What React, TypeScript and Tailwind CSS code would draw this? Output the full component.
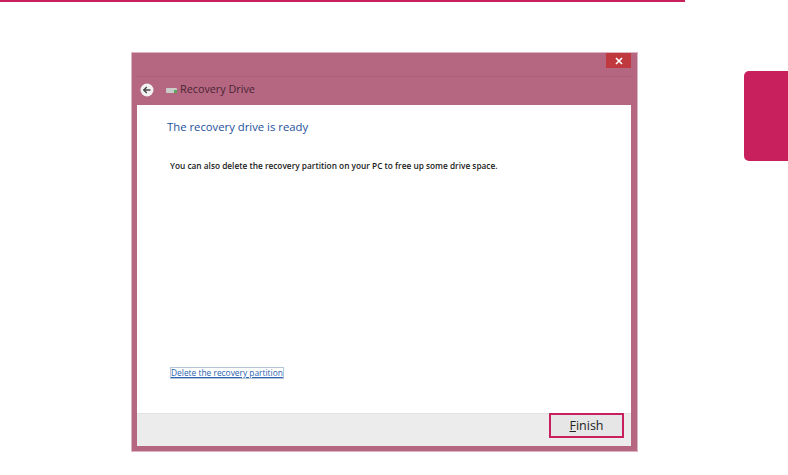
const App = () => {
  return (
    <div className="w-[788px] h-[475px] overflow-hidden bg-white font-['Open_Sans',sans-serif]">
      <div className="h-[2px] w-[685px] bg-[#c8205c]" />

      <div className="flex items-start pl-[131px] pt-[50px]">
        {/* dialog window */}
        <div className="flex flex-col w-[507px] h-[400px] bg-[#b56782] border border-[#dcb4c2] pl-[5px] pr-[6px] pb-[5px]">
          <div className="flex justify-end h-[23px]">
            <div className="flex items-center justify-center w-[25px] h-[15px] bg-[#c0393f]">
              <svg width="8" height="8" viewBox="0 0 8 8">
                <path d="M1 1 L7 7 M7 1 L1 7" stroke="#fff" strokeWidth="1.7" />
              </svg>
            </div>
          </div>

          <div className="flex items-center h-[29px] pl-[3px] pb-[3px] text-[#4a2433] text-[10.8px] border-t border-[#ab6079]">
            <svg width="14" height="14" viewBox="0 0 14 14">
              <circle cx="7" cy="7" r="6.5" fill="#f2f2f2" />
              <path d="M10.5 7 H4 M6.8 4 L3.8 7 L6.8 10" stroke="#4a4a4a" strokeWidth="1.5" fill="none" />
            </svg>
            <svg className="ml-[12px] mt-[2px]" width="11" height="7" viewBox="0 0 11 7">
              <rect x="0" y="1" width="11" height="5" rx="1" fill="#c9ccc9" />
              <rect x="8" y="3" width="3" height="3" fill="#5aa55a" />
            </svg>
            <span className="ml-[3px]">Recovery Drive</span>
          </div>

          <div className="flex flex-col flex-1 bg-white">
            <div className="flex flex-col flex-1 pl-[30px] pt-[14px]">
              <div className="text-[#1d4f9c] text-[11.3px] leading-[16px]">The recovery drive is ready</div>
              <p className="mt-[25px] ml-[3px] text-[#1a1a1a] text-[8.3px] leading-[12px] font-semibold">
                You can also delete the recovery partition on your PC to free up some drive space.
              </p>
              <a className="mt-auto mb-[34px] ml-[3px] w-fit border border-[#b8c4d8] text-[#2a63b0] text-[8.4px] leading-[10px] underline">
                Delete the recovery partition
              </a>
            </div>

            <div className="flex justify-end items-start h-[33px] bg-[#ececec] border-t border-[#e2e2e2] pr-[7px]">
              <div className="flex items-center justify-center w-[75px] h-[25px] -mt-px border-2 border-[#c8205c] bg-[#e6e6e6] text-[#222] text-[12.5px]">
                <span className="mt-px"><span className="underline">F</span>inish</span>
              </div>
            </div>
          </div>
        </div>

        {/* chapter tab */}
        <div className="ml-[106px] mt-[19px] w-[44px] h-[90px] rounded-l-[5px] bg-[#c8205c]" />
      </div>
    </div>
  );
};

export default App;
